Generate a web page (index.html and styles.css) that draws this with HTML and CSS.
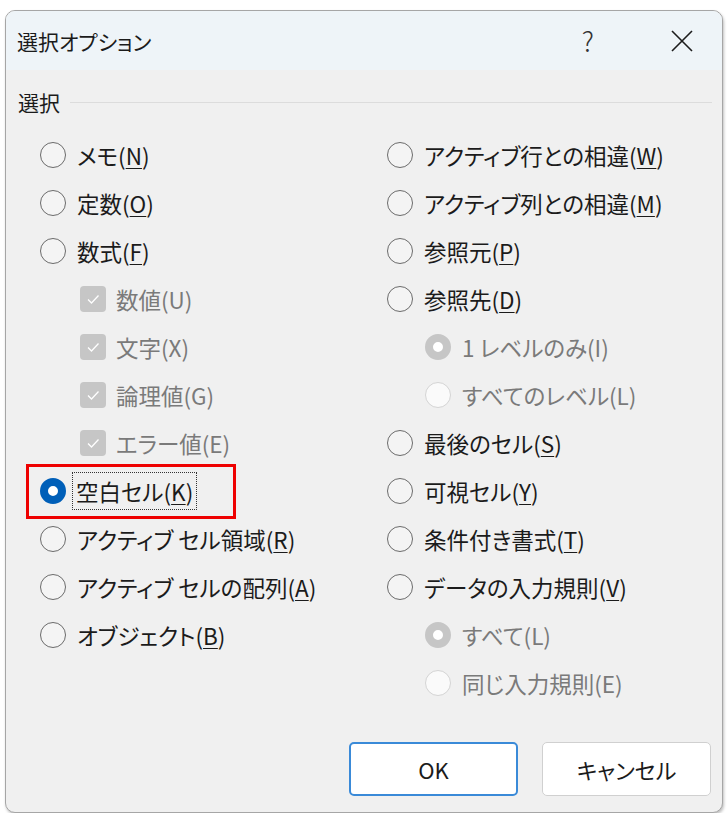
FILE: index.html
```html
<!DOCTYPE html>
<html lang="ja">
<head>
  <meta charset="UTF-8">
  <meta name="viewport" content="width=device-width, initial-scale=1.0">
  <title>選択オプション</title>
  <link rel="stylesheet" href="styles.css">
</head>
<body>
  <div class="dialog">
    <div class="titlebar">
      <span class="title">選択オプション</span>
      <span class="help">?</span>
      <span class="close">
        <svg width="24" height="22" viewBox="0 0 24 22"><path d="M2 1 L22 21 M22 1 L2 21" stroke="#1c1c1c" stroke-width="1.6" fill="none"/></svg>
      </span>
    </div>

    <div class="group-head">
      <span>選択</span>
      <span class="rule"></span>
    </div>

    <div class="options">
      <div class="col">
        <div class="row"><span class="radio"></span><span class="label">メモ(<u>N</u>)</span></div>
        <div class="row"><span class="radio"></span><span class="label">定数(<u>O</u>)</span></div>
        <div class="row"><span class="radio"></span><span class="label">数式(<u>F</u>)</span></div>
        <div class="row sub off"><span class="check"><svg width="26" height="26" viewBox="0 0 26 26"><path d="M8 13.5 L11.5 17 L18.5 9.5" stroke="#fff" stroke-width="1.3" fill="none"/></svg></span><span class="label">数値(U)</span></div>
        <div class="row sub off"><span class="check"><svg width="26" height="26" viewBox="0 0 26 26"><path d="M8 13.5 L11.5 17 L18.5 9.5" stroke="#fff" stroke-width="1.3" fill="none"/></svg></span><span class="label">文字(X)</span></div>
        <div class="row sub off"><span class="check"><svg width="26" height="26" viewBox="0 0 26 26"><path d="M8 13.5 L11.5 17 L18.5 9.5" stroke="#fff" stroke-width="1.3" fill="none"/></svg></span><span class="label">論理値(G)</span></div>
        <div class="row sub off"><span class="check"><svg width="26" height="26" viewBox="0 0 26 26"><path d="M8 13.5 L11.5 17 L18.5 9.5" stroke="#fff" stroke-width="1.3" fill="none"/></svg></span><span class="label">エラー値(E)</span></div>
        <div class="row marked"><span class="radio on"></span><span class="label focus">空白セル(<u>K</u>)</span></div>
        <div class="row"><span class="radio"></span><span class="label">アクティブ セル領域(<u>R</u>)</span></div>
        <div class="row"><span class="radio"></span><span class="label">アクティブ セルの配列(<u>A</u>)</span></div>
        <div class="row"><span class="radio"></span><span class="label">オブジェクト(<u>B</u>)</span></div>
      </div>
      <div class="col">
        <div class="row"><span class="radio"></span><span class="label">アクティブ行との相違(<u>W</u>)</span></div>
        <div class="row"><span class="radio"></span><span class="label">アクティブ列との相違(<u>M</u>)</span></div>
        <div class="row"><span class="radio"></span><span class="label">参照元(<u>P</u>)</span></div>
        <div class="row"><span class="radio"></span><span class="label">参照先(<u>D</u>)</span></div>
        <div class="row sub-r off"><span class="radio on"></span><span class="label">1 レベルのみ(I)</span></div>
        <div class="row sub-r off"><span class="radio"></span><span class="label">すべてのレベル(L)</span></div>
        <div class="row"><span class="radio"></span><span class="label">最後のセル(<u>S</u>)</span></div>
        <div class="row"><span class="radio"></span><span class="label">可視セル(<u>Y</u>)</span></div>
        <div class="row"><span class="radio"></span><span class="label">条件付き書式(<u>T</u>)</span></div>
        <div class="row"><span class="radio"></span><span class="label">データの入力規則(<u>V</u>)</span></div>
        <div class="row sub-r off"><span class="radio on"></span><span class="label">すべて(L)</span></div>
        <div class="row sub-r off"><span class="radio"></span><span class="label">同じ入力規則(E)</span></div>
      </div>
    </div>

    <div class="buttons">
      <button class="btn primary">OK</button>
      <button class="btn">キャンセル</button>
    </div>
  </div>
</body>
</html>
```

FILE: styles.css
```css
body {
  margin: 0;
  padding: 0;
  background-color: #ffffff;
  font-family: "Noto Sans CJK JP", "Noto Sans", sans-serif;
  font-feature-settings: "palt";
  color: #1b1b1b;
}

.dialog {
  box-sizing: border-box;
  width: 718px;
  height: 803px;
  margin: 10px 0 0 5px;
  border: 1px solid #a6a6a6;
  border-radius: 10px;
  background-color: #f0f0f0;
  box-shadow: 1px 2px 3px rgba(0, 0, 0, 0.25);
  overflow: hidden;
}

.titlebar {
  display: flex;
  align-items: center;
  height: 59px;
  padding-left: 11px;
  background-color: #eef4f8;
}

.title {
  font-size: 21px;
  flex: 1;
}

.help {
  font-size: 27px;
  font-weight: 300;
  color: #333;
  margin-right: 76px;
}

.close {
  display: flex;
  margin-right: 28px;
}

.group-head {
  display: flex;
  align-items: center;
  height: 26px;
  margin: 19px 10px 0 12px;
  font-size: 21px;
}

.rule {
  flex: 1;
  height: 1px;
  margin-left: 10px;
  background-color: #dcdcdc;
}

.options {
  display: grid;
  grid-template-columns: 347px 1fr;
  margin-top: 16px;
  padding-left: 34px;
}

.row {
  display: flex;
  align-items: center;
  height: 48px;
  font-size: 22.5px;
}

.radio {
  box-sizing: border-box;
  flex: none;
  width: 26px;
  height: 26px;
  margin-right: 11px;
  border: 1.5px solid #6b6b6b;
  border-radius: 50%;
  background-color: #f4f4f4;
}

.radio.on {
  border: 8px solid #005fb8;
  background-color: #ffffff;
}

.check {
  display: flex;
  flex: none;
  width: 26px;
  height: 26px;
  margin-right: 10px;
  border-radius: 4px;
  background-color: #c6c6c6;
}

.sub {
  padding-left: 40px;
}

.sub-r {
  padding-left: 38px;
}

.off .label {
  color: #7a7a7a;
}

.off .radio {
  border: 1px solid #d4d4d4;
  background-color: #fafafa;
}

.off .radio.on {
  border: 8px solid #c6c6c6;
  background-color: #ffffff;
}

u {
  text-underline-offset: 3px;
  text-decoration-thickness: 1px;
}

.marked {
  position: relative;
}

.marked::after {
  content: "";
  position: absolute;
  left: -14px;
  top: -3px;
  width: 204px;
  height: 49px;
  border: 3px solid #ee0000;
}

.focus {
  margin-left: -4px;
  padding: 2px 3px;
  outline: 1px dotted #333;
}

.buttons {
  display: flex;
  justify-content: flex-end;
  gap: 24px;
  margin-top: 35px;
  padding-right: 11px;
}

.btn {
  box-sizing: border-box;
  width: 169px;
  height: 54px;
  border: 1px solid #d0d0d0;
  border-radius: 5px;
  background-color: #ffffff;
  font-family: inherit;
  font-feature-settings: "palt";
  font-size: 22px;
  color: #1b1b1b;
}

.btn.primary {
  border: 2px solid #3a8ad8;
}
```
